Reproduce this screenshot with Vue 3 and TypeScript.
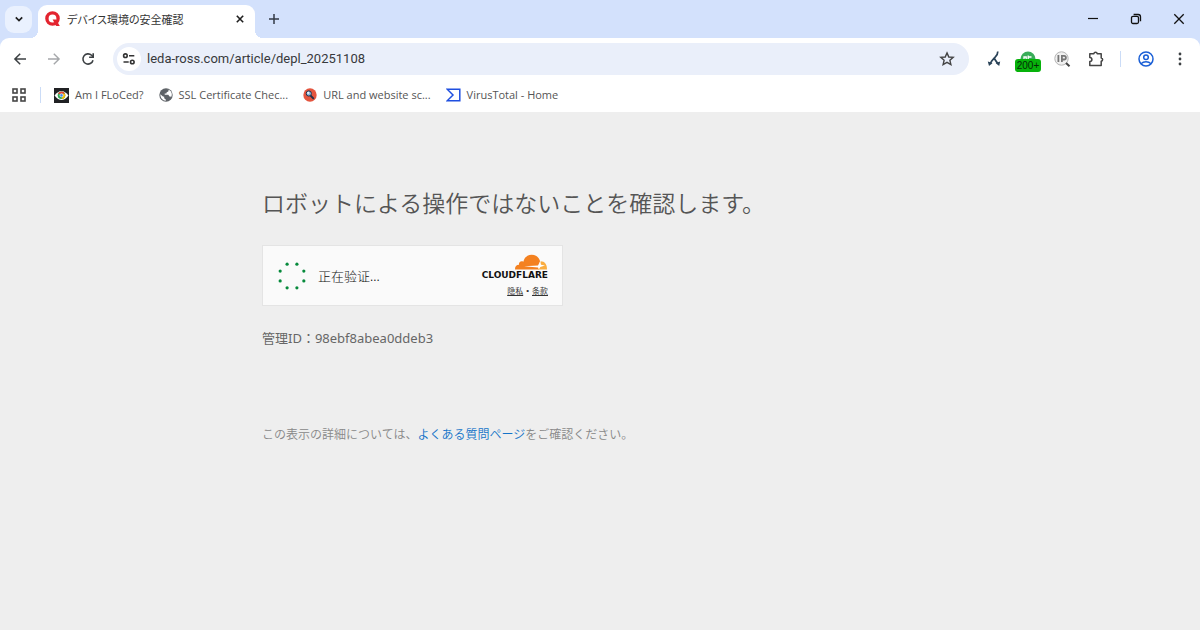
<script setup lang="ts">
import { ref } from 'vue'

interface Bookmark {
  label: string
  icon: 'floc' | 'globe' | 'scan' | 'sigma'
}

const address = ref('leda-ross.com/article/depl_20251108')
const bookmarks: Bookmark[] = [
  { label: 'Am I FLoCed?', icon: 'floc' },
  { label: 'SSL Certificate Chec...', icon: 'globe' },
  { label: 'URL and website sc...', icon: 'scan' },
  { label: 'VirusTotal - Home', icon: 'sigma' },
]
const dots = Array.from({ length: 8 }, (_, i) => {
  const a = ((i + 0.5) * Math.PI) / 4
  return { x: 15 + 12.8 * Math.cos(a), y: 15 + 12.8 * Math.sin(a) }
})
</script>

<template>
  <div class="window">
    <header>
      <div class="tabstrip">
        <button class="tab-search" aria-label="Search tabs">
          <svg width="10" height="10" viewBox="0 0 10 10"><path d="M1.8 3.3 5 6.5 8.2 3.3" fill="none" stroke="#1f1f1f" stroke-width="1.7" /></svg>
        </button>
        <div class="tab">
          <svg width="16" height="16" viewBox="0 0 16 16">
            <circle cx="7.5" cy="7.5" r="5.6" fill="none" stroke="#e3242f" stroke-width="3.4" />
            <path d="M7.6 8.4h3.4l3.8 6.6h-3.6z" fill="#e3242f" />
          </svg>
          <span class="tab-title">デバイス環境の安全確認</span>
          <button class="close" aria-label="Close tab">
            <svg width="8" height="8" viewBox="0 0 8 8"><path d="M.8.8l6.4 6.4M7.2.8.8 7.2" stroke="#1f1f1f" stroke-width="1.6" /></svg>
          </button>
        </div>
        <button class="new-tab" aria-label="New tab">
          <svg width="12" height="12" viewBox="0 0 12 12"><path d="M6 1v10M1 6h10" stroke="#333a45" stroke-width="1.5" /></svg>
        </button>
        <div class="win-controls">
          <button aria-label="Minimize">
            <svg width="12" height="12" viewBox="0 0 12 12"><path d="M1 5.5h10" stroke="#111" stroke-width="1.2" /></svg>
          </button>
          <button aria-label="Restore">
            <svg width="12" height="12" viewBox="0 0 12 12" fill="none" stroke="#111" stroke-width="1.3"><rect x="1.5" y="3.3" width="7" height="7.2" rx="1.5" /><path d="M3.6 1.5h4.6a2.3 2.3 0 0 1 2.3 2.3v4.4" /></svg>
          </button>
          <button aria-label="Close">
            <svg width="12" height="12" viewBox="0 0 12 12"><path d="M1.3 1.3l9.4 9.4M10.7 1.3l-9.4 9.4" stroke="#111" stroke-width="1.3" /></svg>
          </button>
        </div>
      </div>

      <div class="toolbar">
        <button class="tool" aria-label="Back">
          <svg width="14" height="14" viewBox="0 0 14 14" fill="none" stroke="#3c4043" stroke-width="1.5"><path d="M13 7H2M7.2 1.7 1.9 7l5.3 5.3" /></svg>
        </button>
        <button class="tool" aria-label="Forward">
          <svg width="14" height="14" viewBox="0 0 14 14" fill="none" stroke="#a5a7aa" stroke-width="1.4"><path d="M1 7h11M6.8 1.7 12.1 7l-5.3 5.3" /></svg>
        </button>
        <button class="tool" aria-label="Reload">
          <svg width="14" height="14" viewBox="0 0 14 14" fill="none" stroke="#3c4043" stroke-width="1.6"><path d="M12 8.2A5.1 5.1 0 1 1 10.6 3.3L12 4.8" /><path d="M12.2 1.2v4H8.1" /></svg>
        </button>
        <div class="omnibox">
          <button class="site-info" aria-label="View site information">
            <svg width="14" height="14" viewBox="0 0 14 14" fill="none" stroke="#333" stroke-width="1.6"><circle cx="3.4" cy="3.7" r="1.8" /><path d="M7 3.7h5.3M1.5 10h5.2" /><circle cx="10.3" cy="10" r="1.8" /></svg>
          </button>
          <input v-model="address" class="url" type="text" aria-label="Address" spellcheck="false" />
          <button class="star" aria-label="Bookmark this page">
            <svg width="16" height="16" viewBox="0 0 16 16" fill="none" stroke="#444" stroke-width="1.4"><path d="M8 1.9 9.8 6l4.4.4-3.3 2.9 1 4.3L8 11.3l-3.9 2.3 1-4.3L1.8 6.4 6.2 6z" /></svg>
          </button>
        </div>
        <button class="tool" aria-label="Redirect path">
          <svg width="16" height="18" viewBox="0 0 16 18" fill="none" stroke="#2a4358" stroke-width="1.7"><path d="M11.8 1.5c.2 3.2-1.6 4.600-3.300 6.300C6.500 9.800 4.900 11 4.300 14M8.400 8.400c1 2.600 2.500 3.200 3.500 5.600" /><path d="M1.8 11.600 6.600 13l-3.600 3.100zM14.200 11.600 9.600 13l3.600 3.100z" fill="#2a4358" stroke="none" /></svg>
        </button>
        <button class="tool counter" aria-label="Requests">
          <svg width="16" height="16" viewBox="0 0 16 16"><circle cx="8" cy="8" r="7.5" fill="#39ad59" /><path d="M4 8V6h2.200v2M8.200 8V4.500M8.200 6h3.300" stroke="#fff" stroke-width="1.3" fill="none" /></svg>
          <span class="badge">200+</span>
        </button>
        <button class="tool" aria-label="IP lookup">
          <svg width="17" height="17" viewBox="0 0 17 17" fill="none"><circle cx="7.5" cy="7.5" r="6.7" fill="#f1f1f1" stroke="#b4b4b4" /><path d="m12 12 3.5 3.3" stroke="#444" stroke-width="2" /><path d="M4.4 4v7M7.9 11V4.900h2.200a1.700 1.700 0 0 1 0 3.600H8" stroke="#777" stroke-width="1.8" /></svg>
        </button>
        <button class="tool" aria-label="Extensions">
          <svg width="16" height="16" viewBox="0 0 16 16"><path d="M1.8 2.700h4.100C6.200.9 8.900.9 9.200 2.700h4v4.200c1.900.3 1.900 3 0 3.300v4.300H1.800v-3.900c2.800-.3 2.800-3.900 0-4.100z" fill="none" stroke="#444" stroke-width="1.5" stroke-linejoin="round" /></svg>
        </button>
        <span class="tool-sep"></span>
        <button class="tool" aria-label="Profile">
          <svg width="16" height="16" viewBox="0 0 16 16" fill="none" stroke="#1a5fd6" stroke-width="1.5"><circle cx="8" cy="8" r="7" /><circle cx="8" cy="6.3" r="2.3" /><path d="M3 12.700c2.700-2.500 7.300-2.500 10 0" /></svg>
        </button>
        <button class="tool" aria-label="Menu">
          <svg width="4" height="14" viewBox="0 0 4 14" fill="#3c4043"><circle cx="2" cy="2" r="1.4" /><circle cx="2" cy="7" r="1.4" /><circle cx="2" cy="12" r="1.4" /></svg>
        </button>
      </div>

      <nav class="bookmarks" aria-label="Bookmarks">
        <button class="apps" aria-label="Tab groups">
          <svg width="14" height="14" viewBox="0 0 14 14" fill="none" stroke="#474747" stroke-width="1.6"><rect x="1" y="1" width="4" height="4" /><rect x="9" y="1" width="4" height="4" /><rect x="1" y="9" width="4" height="4" /><rect x="9" y="9" width="4" height="4" /></svg>
        </button>
        <span class="mark-sep"></span>
        <a v-for="b in bookmarks" :key="b.label" href="#" class="mark">
          <svg v-if="b.icon === 'floc'" width="15" height="15" viewBox="0 0 15 15">
            <rect width="15" height="15" fill="#202124" />
            <path d="M.5 7.500Q7.500-1.500 14.500 7.500 7.500 16.500.5 7.500z" fill="#fff" />
            <circle cx="7.5" cy="7.3" r="3.8" fill="#34a853" />
            <path d="M3.9 6a3.800 3.800 0 0 1 7.100-.2z" fill="#ea4335" /><path d="M11 5.800A3.800 3.800 0 0 1 7.500 11.100L9.200 7.300 7.500 5.800z" fill="#fbbc04" />
            <circle cx="7.5" cy="7.3" r="1.6" fill="#4285f4" stroke="#fff" stroke-width=".6" />
          </svg>
          <svg v-else-if="b.icon === 'globe'" width="14" height="14" viewBox="0 0 14 14">
            <circle cx="7" cy="7" r="6.7" fill="#5f6368" />
            <path d="M1.3 6.300 4 8.600l1.200.2v1.400l1.600 1.200v1.400C3.700 12.600 1.300 10 1.300 6.300zM7.700 1.500l1.900.6-.3 1.500-1.600.6-.3 1.200-1.700.2v1.200h3.600l1.200 1.600 1.700.3-.8 1.500c2.400-2.500 1.800-6.600-1.200-8.200z" fill="#fff" />
          </svg>
          <svg v-else-if="b.icon === 'scan'" width="14" height="14" viewBox="0 0 14 14">
            <circle cx="7" cy="7" r="6.7" fill="#e4553f" />
            <path d="m7.500 7.500 3.300 3.400" stroke="#22304a" stroke-width="1.8" /><circle cx="5.8" cy="5.5" r="2.6" fill="#8fb8dc" stroke="#22304a" /><circle cx="5.2" cy="4.9" r="1.1" fill="#e5f2fb" />
          </svg>
          <svg v-else width="15" height="14" viewBox="0 0 15 14"><path d="M1.2 1.200h12.600v11.600H1.200L7 7z" fill="none" stroke="#1f4fe0" stroke-width="1.5" /></svg>
          <span>{{ b.label }}</span>
        </a>
      </nav>
    </header>

    <main>
      <div class="content">
        <h1>ロボットによる操作ではないことを確認します。</h1>
        <section class="widget">
          <svg class="spinner" width="30" height="30" viewBox="0 0 30 30" aria-hidden="true">
            <circle v-for="(d, i) in dots" :key="i" :cx="d.x" :cy="d.y" r="1.6" fill="#078a3c" />
          </svg>
          <span class="status" lang="zh-CN">正在验证...</span>
          <div class="brand">
            <svg width="34" height="17" viewBox="0 0 34 17">
              <path d="M1 15.500C.8 12.500 2.500 10.800 5 10.700 4.500 8 7.200 6.300 9.400 7.700 10.300 3.500 13.600.8 17.700.8c4.200 0 7.400 2.600 8.300 6.300L25 15.500z" fill="#f48120" />
              <path d="M26.700 7.300c4 0 6.500 3.300 6.300 8.200h-9l1.700-3.800z" fill="#faad3f" />
              <path d="M10 12.200 24 11.500 26 7.500l1 3.200 4 .9-4.700 1.300-1.500 2.600-.7-2z" fill="#fff" />
            </svg>
            <span class="wordmark">CLOUDFLARE</span>
            <span class="legal" lang="zh-CN"><a href="#">隐私</a><span class="bullet">•</span><a href="#">条款</a></span>
          </div>
        </section>
        <p class="ident">管理ID：98ebf8abea0ddeb3</p>
        <p class="help">この表示の詳細については、<a href="#">よくある質問ページ</a>をご確認ください。</p>
      </div>
    </main>
  </div>
</template>

<style>
body {
  margin: 0;
}
</style>

<style scoped>
.window {
  min-height: 100vh;
  display: flex;
  flex-direction: column;
  background: #eee;
  font-family: "Open Sans", "Noto Sans CJK JP", sans-serif;
}
button {
  display: flex;
  align-items: center;
  justify-content: center;
  padding: 0;
  border: 0;
  background: none;
  font: inherit;
}
svg {
  display: block;
  flex: none;
}
header {
  background: #d3e1fc;
}
.tabstrip {
  display: flex;
  align-items: center;
  height: 38px;
  padding-left: 5px;
}
.tab-search {
  width: 27px;
  height: 27px;
  border-radius: 9px;
  background: #eaf1fe;
}
.tab {
  position: relative;
  display: flex;
  align-items: center;
  gap: 6px;
  box-sizing: border-box;
  width: 217px;
  height: 33px;
  margin-left: 6px;
  padding: 0 10px 5px 7px;
  align-self: flex-end;
  border-radius: 9px 9px 0 0;
  background: #fff;
}
.tab::before,
.tab::after {
  content: "";
  position: absolute;
  bottom: 0;
  width: 8px;
  height: 8px;
}
.tab::before {
  right: 100%;
  background: radial-gradient(circle at 0 0, transparent 8px, #fff 8px);
}
.tab::after {
  left: 100%;
  background: radial-gradient(circle at 100% 0, transparent 8px, #fff 8px);
}
.tab-title {
  flex: 1;
  font-size: 11px;
  line-height: 18px;
  white-space: nowrap;
  color: #333;
  font-family: "Noto Sans CJK JP", sans-serif;
  font-feature-settings: "palt";
}
.close {
  width: 10px;
  height: 16px;
}
.new-tab {
  width: 24px;
  height: 24px;
  margin-left: 7px;
}
.win-controls {
  display: flex;
  margin-left: auto;
}
.win-controls button {
  width: 43px;
  height: 36px;
}
.toolbar {
  display: flex;
  align-items: center;
  height: 42px;
  padding: 0 3px;
  border-radius: 9px 9px 0 0;
  background: #fff;
}
.tool {
  flex: none;
  width: 34px;
  height: 30px;
}
.omnibox {
  flex: 1;
  display: flex;
  align-items: center;
  box-sizing: border-box;
  height: 32px;
  margin: 0 8px;
  padding: 0 12px 0 4px;
  border-radius: 16px;
  background: #eaeffa;
}
.site-info {
  width: 24px;
  height: 24px;
  border-radius: 50%;
  background: #fff;
}
.url {
  flex: 1;
  min-width: 0;
  margin-left: 6px;
  padding: 0;
  border: 0;
  outline: 0;
  background: none;
  font-family: Roboto, sans-serif;
  font-size: 13px;
  line-height: 20px;
  color: #37393c;
}
.star {
  width: 20px;
  height: 20px;
}
.counter {
  position: relative;
}
.badge {
  position: absolute;
  left: 4px;
  bottom: 2px;
  width: 26px;
  border-radius: 3px;
  background: #07b20b;
  font-family: "Liberation Sans", sans-serif;
  font-size: 10px;
  line-height: 13px;
  color: #052b06;
  text-align: center;
}
.tool-sep,
.mark-sep {
  width: 1px;
  height: 16px;
  background: #cbdcf7;
}
.tool-sep {
  margin: 0 8px 0 7px;
}
.bookmarks {
  display: flex;
  align-items: center;
  box-sizing: border-box;
  height: 32px;
  padding: 0 12px 2px;
  background: #fff;
}
.apps {
  width: 14px;
  height: 20px;
}
.mark-sep {
  margin: 0 13px 0 14px;
}
.mark {
  display: flex;
  align-items: center;
  gap: 6px;
  margin-right: 15px;
  font-size: 11px;
  line-height: 16px;
  color: #555;
  text-decoration: none;
  white-space: nowrap;
}
main {
  flex: 1;
  padding: 74px 24px 24px;
}
.content {
  max-width: 676px;
  margin: 0 auto;
  font-family: "Noto Sans", "Noto Sans CJK JP", sans-serif;
}
h1 {
  margin: 0 0 27px;
  font-family: "Noto Sans CJK JP", sans-serif;
  font-size: 23px;
  line-height: 32px;
  font-weight: 350;
  color: #555;
}
.widget {
  display: flex;
  align-items: center;
  box-sizing: border-box;
  width: 301px;
  max-width: 100%;
  height: 61px;
  padding: 0 14px;
  border: 1px solid #e4e4e4;
  background: #fafafa;
}
.status {
  margin-left: 11px;
  font-family: "Noto Sans CJK SC", sans-serif;
  font-size: 13px;
  line-height: 20px;
  font-weight: 300;
  color: #111;
}
.brand {
  display: flex;
  flex-direction: column;
  align-items: flex-end;
  margin-left: auto;
}
.wordmark {
  font-family: "DejaVu Sans", sans-serif;
  font-weight: 700;
  font-size: 9px;
  line-height: 9px;
  color: #111;
}
.legal {
  display: flex;
  gap: 3px;
  margin-top: 5px;
  font-family: "Noto Sans CJK SC", sans-serif;
  font-size: 8px;
  line-height: 12px;
  color: #333;
}
.bullet {
  font-family: "Liberation Sans", sans-serif;
}
.legal a {
  color: inherit;
}
.ident {
  margin: 22px 0 0;
  font-size: 13px;
  line-height: 20px;
  color: #666;
}
.help {
  margin: 77px 0 0;
  font-size: 12px;
  line-height: 20px;
  font-weight: 350;
  color: #888;
}
.help a {
  color: #1473c8;
  text-decoration: none;
}
</style>
